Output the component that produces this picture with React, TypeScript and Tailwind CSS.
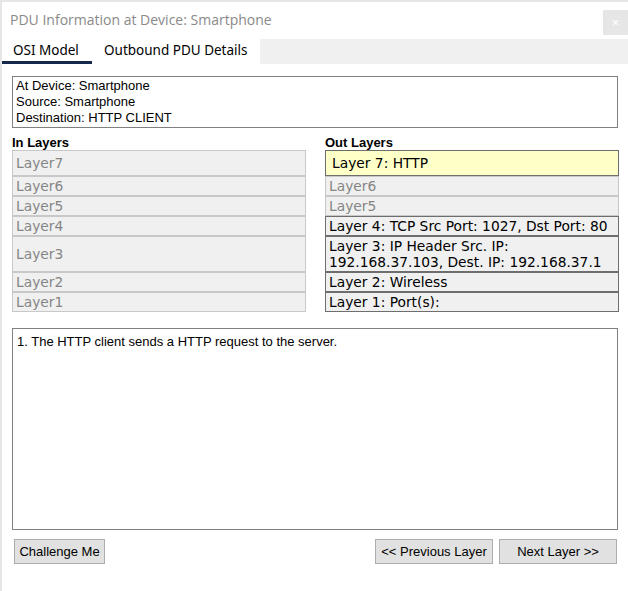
const inLayers = [
  { label: 'Layer7', tall: 'py-[4px]' },
  { label: 'Layer6', tall: 'py-px' },
  { label: 'Layer5', tall: 'py-px' },
  { label: 'Layer4', tall: 'py-px' },
  { label: 'Layer3', tall: 'py-[9px]' },
  { label: 'Layer2', tall: 'py-px' },
  { label: 'Layer1', tall: 'py-px' },
]

type OutLayer = { label: string; kind: 'active' | 'off' | 'on' }

const outLayers: OutLayer[] = [
  { label: 'Layer 7: HTTP', kind: 'active' },
  { label: 'Layer6', kind: 'off' },
  { label: 'Layer5', kind: 'off' },
  { label: 'Layer 4: TCP Src Port: 1027, Dst Port: 80', kind: 'on' },
  { label: 'Layer 3: IP Header Src. IP: 192.168.37.103, Dest. IP: 192.168.37.1', kind: 'on' },
  { label: 'Layer 2: Wireless', kind: 'on' },
  { label: 'Layer 1: Port(s):', kind: 'on' },
]

const verdana = "font-['DejaVu_Sans',Verdana,sans-serif]"
const arial = "font-['Liberation_Sans',Arial,sans-serif]"

export default function App() {
  return (
    <div className="w-[628px] h-[591px] bg-white border-t-2 border-l-2 border-[#e6e6e6] overflow-hidden flex flex-col">
      {/* title bar */}
      <div className="flex items-start justify-between h-[37px] pt-[8px] pl-[8px]">
        <div className="font-['Open_Sans',sans-serif] text-[14px] text-[#8a8a8a] leading-[20px]">
          PDU Information at Device: Smartphone
        </div>
        <div className="w-[25px] h-[25px] bg-[#e6e6e6] text-white flex items-center justify-center text-[13px] leading-none">
          ×
        </div>
      </div>

      {/* tabs */}
      <div className="flex h-[25px] font-['Noto_Sans',Tahoma,sans-serif] text-[13.5px] text-black">
        <div className="w-[90px] flex flex-col">
          <div className="flex-1 pl-[11px] leading-[22px]">OSI Model</div>
          <div className="h-[3px] bg-[#14294b]" />
        </div>
        <div className="w-[168px] pl-[12px] leading-[22px]">Outbound PDU Details</div>
        <div className="flex-1 bg-[#f0f0f0]" />
      </div>

      <div className="flex flex-col px-[10px] pt-[12px]">
        {/* device info */}
        <div className={`border border-[#808080] h-[52px] px-[3px] pt-px ${arial} text-[13px] leading-[16px] text-black`}>
          <div>At Device: Smartphone</div>
          <div>Source: Smartphone</div>
          <div>Destination: HTTP CLIENT</div>
        </div>

        {/* layers */}
        <div className="grid grid-cols-[294px_294px] gap-x-[19px] mt-[7px]">
          <div className={`${arial} font-bold text-[13px] leading-[15px] text-black`}>In Layers</div>
          <div className={`${arial} font-bold text-[13px] leading-[15px] text-black`}>Out Layers</div>
          {inLayers.map((l, i) => {
            const o = outLayers[i]
            return [
              <div
                key={`in-${i}`}
                className={`border border-[#c8c8c8] bg-[#f0f0f0] pl-[3px] ${l.tall} ${verdana} text-[13.8px] leading-[16px] text-[#858585] flex items-center`}
              >
                {l.label}
              </div>,
              <div
                key={`out-${i}`}
                className={
                  o.kind === 'active'
                    ? `border border-[#6e6e6e] bg-[#ffffc8] pl-[6px] py-[4px] ${verdana} text-[13.8px] leading-[16px] text-black`
                    : o.kind === 'off'
                      ? `border border-[#c8c8c8] bg-[#f0f0f0] pl-[3px] py-px ${verdana} text-[13.8px] leading-[16px] text-[#858585]`
                      : `border border-[#6e6e6e] bg-[#f0f0f0] pl-[3px] py-px ${verdana} text-[13.8px] leading-[16px] text-black`
                }
              >
                {o.label}
              </div>,
            ]
          })}
        </div>

        {/* description */}
        <div className={`mt-[16px] border border-[#808080] h-[202px] px-[4px] pt-[5px] ${arial} text-[13px] leading-[16px] text-black`}>
          1. The HTTP client sends a HTTP request to the server.
        </div>

        {/* buttons */}
        <div className={`flex items-center justify-between mt-[9px] ${arial} text-[13px] text-black`}>
          <button className="ml-[2px] h-[25px] w-[91px] bg-[#e1e1e1] border border-[#adadad]">Challenge Me</button>
          <div className="flex gap-[6px] mr-[1px]">
            <button className="h-[25px] w-[118px] bg-[#e1e1e1] border border-[#adadad]">&lt;&lt; Previous Layer</button>
            <button className="h-[25px] w-[118px] bg-[#e1e1e1] border border-[#adadad]">Next Layer &gt;&gt;</button>
          </div>
        </div>
      </div>
    </div>
  )
}
